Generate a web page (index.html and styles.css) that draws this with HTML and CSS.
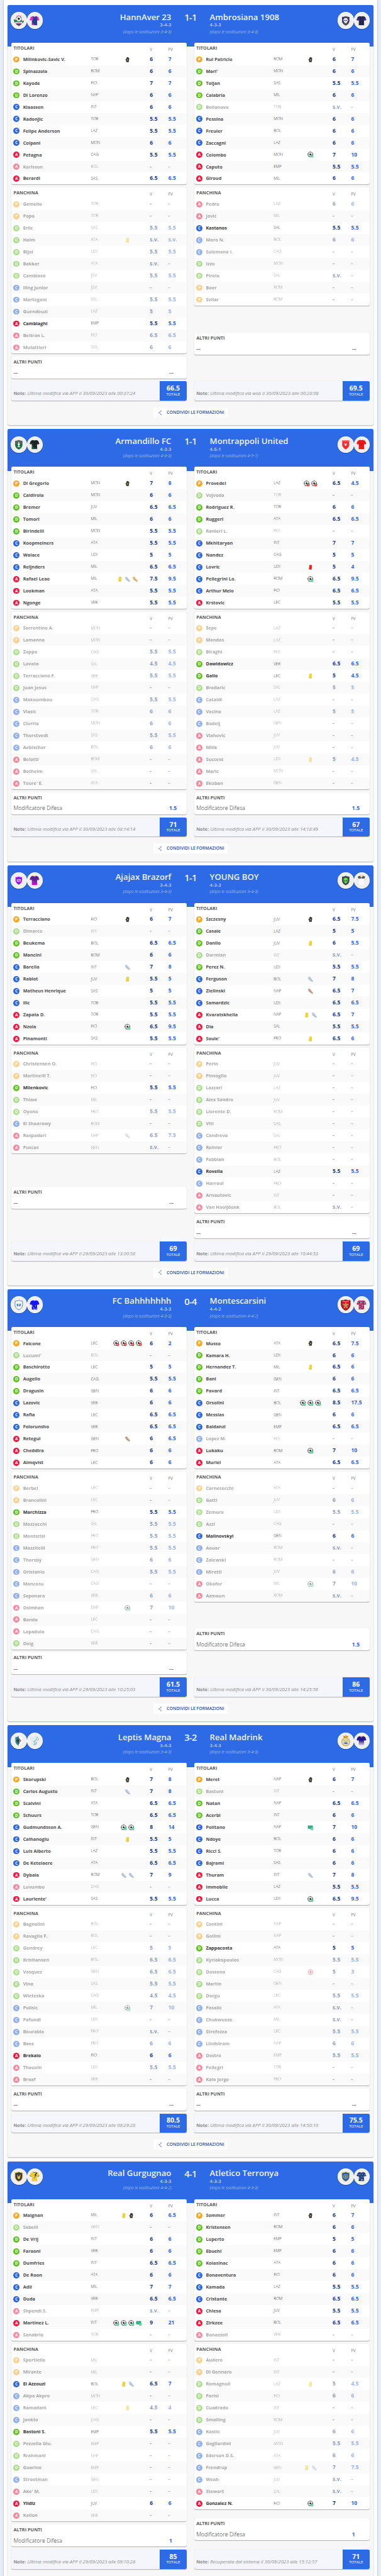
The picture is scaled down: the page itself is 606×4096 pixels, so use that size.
FILE: index.html
```html
<!DOCTYPE html>
<html lang="it">
<head>
<meta charset="utf-8">
<title>Formazioni</title>
<link rel="stylesheet" href="styles.css">
</head>
<body>
<svg class="sprite" aria-hidden="true">
  <defs>
    <linearGradient id="gGreen" x2="0" y2="1"><stop offset=".2" stop-color="#5a6360"/><stop offset=".6" stop-color="#14713f"/></linearGradient>
    <linearGradient id="gNavy" x2="0" y2="1"><stop offset=".45" stop-color="#24138c"/><stop offset="1" stop-color="#dcdce8"/></linearGradient>
    <linearGradient id="gPurple" x2="0" y2="1"><stop offset=".45" stop-color="#5b1f94"/><stop offset=".7" stop-color="#d010d8"/></linearGradient>
    <path id="shirtShape" d="M8.5 2 4 4 1.5 10.5 5.5 12 6.5 9.5 6.2 22H17.8L17.5 9.5 18.5 12 22.5 10.5 20 4 15.5 2Q12 4 8.5 2Z"/>
    <clipPath id="shirtClip"><use href="#shirtShape"/></clipPath>
    <path id="shieldShape" d="M4 4Q9 4 12 2 15 4 20 4V12Q20 19 12 22.5 4 19 4 12Z"/>
    <clipPath id="shieldClip"><use href="#shieldShape"/></clipPath>
  </defs>

  <symbol id="i-g" viewBox="0 0 16 16"><path d="M4.6 14.5 4.4 11 2.4 7.2Q3.4 6 4.6 7.2L4.9 3.2Q5.8 2 6.5 3L6.9 1.7Q7.8.7 8.6 1.7L8.9 2.2Q9.8 1.2 10.5 2.4L10.8 3.4Q11.8 3 12.2 4.2L11.8 9.5 10.8 14.5Z" fill="#3c3c3c"/><path d="M7.8 6.6 9.3 8.6 7.8 10.6 6.3 8.6Z" fill="#f3c52b"/></symbol>
  <symbol id="i-ball" viewBox="0 0 16 16"><circle cx="7.6" cy="7.6" r="6.5" fill="#fff" stroke="#3a3a3a" stroke-width="1"/><path d="M7.6 4.6 10.3 6.6 9.3 9.8H5.9L4.9 6.6ZM5.6 1.4 7.6 2.6 9.6 1.4ZM1.2 8.8 1.2 5.2 2.9 6.6 2.6 8.6ZM14 8.8V5.2L12.3 6.6 12.6 8.6ZM3.6 12.8 4.2 11 6 12.2 6 13.9ZM11.6 12.8 11 11 9.2 12.2 9.2 13.9Z" fill="#2e2e2e"/></symbol>
  <symbol id="i-b" viewBox="0 0 16 16"><use href="#i-ball"/><circle cx="11.8" cy="11.6" r="3.8" fill="#3fd08a"/><path d="M10 11.7 11.4 13 13.7 10.2" fill="none" stroke="#fff" stroke-width="1.1"/></symbol>
  <symbol id="i-x" viewBox="0 0 16 16"><use href="#i-ball"/><circle cx="11.8" cy="11.6" r="3.8" fill="#e62a26"/><path d="M10.4 10.2 13.2 13M13.2 10.2 10.4 13" stroke="#fff" stroke-width="1.1"/></symbol>
  <symbol id="i-y" viewBox="0 0 16 16"><path d="M5.4 2 12 2.8 10.6 14.2 3.8 13.4Z" fill="#f5d327"/></symbol>
  <symbol id="i-r" viewBox="0 0 16 16"><path d="M5.4 2 12 2.8 10.6 14.2 3.8 13.4Z" fill="#f3211b"/></symbol>
  <symbol id="i-s" viewBox="0 0 16 16"><path d="M1.6 2.4Q3.4 3.4 5.6 1.8L13 10.6Q15 13.2 13.6 14.2 11.6 14.2 9.4 12L3.6 7.6Q1.4 5.4 1.6 2.4Z" fill="#b4cce4"/><path d="M3.4 8 13.2 14.6" stroke="#8496ab" stroke-width=".9"/></symbol>
  <symbol id="i-o" viewBox="0 0 16 16"><path d="M1.6 2.4Q3.4 3.4 5.6 1.8L13 10.6Q15 13.2 13.6 14.2 11.6 14.2 9.4 12L3.6 7.6Q1.4 5.4 1.6 2.4Z" fill="#eab765"/><path d="M3.4 8 13.2 14.6" stroke="#a5804a" stroke-width=".9"/></symbol>
  <symbol id="i-z" viewBox="0 0 16 16"><path d="M1.6 2.4Q3.4 3.4 5.6 1.8L13 10.6Q15 13.2 13.6 14.2 11.6 14.2 9.4 12L3.6 7.6Q1.4 5.4 1.6 2.4Z" fill="#cf9a86"/><path d="M3.4 8 13.2 14.6" stroke="#96705f" stroke-width=".9"/></symbol>
  <symbol id="i-p" viewBox="0 0 16 16"><path d="M1.2 2.8H13.6V11H2.6L1.2 9.4Z" fill="#1fa27c"/><path d="M3 5H12M3 7.6H12M5.4 3.6V9.6M8.8 3.6V9.6" stroke="#7fd5ba" stroke-width=".5"/><circle cx="11.8" cy="11" r="3.6" fill="#3fd08a"/><path d="M10.2 11 11.5 12.3 13.5 9.7" fill="none" stroke="#fff" stroke-width="1.1"/></symbol>
  <symbol id="i-w" viewBox="0 0 16 16"><circle cx="8" cy="8" r="6.2" fill="#fff" stroke="#ee1c1c" stroke-width="1.1"/><path d="M8 4.8 10.8 6.9 9.7 10.3H6.3L5.2 6.9ZM5.8 1.9 8 3.2 10.2 1.9ZM1.8 8.6V5.6L3.4 7ZM14.2 8.6V5.6L12.6 7ZM4.2 13 5 11 6.6 13.6ZM11.8 13 11 11 9.4 13.6Z" fill="#ee1c1c"/></symbol>
  <symbol id="i-share" viewBox="0 0 10 16"><path d="M7 3.4 3 8 7 12.6" fill="none" stroke="#3c5da8" stroke-width="1"/><circle cx="7.6" cy="2.8" r="1.5" fill="#fff" stroke="#3c5da8" stroke-width=".9"/><circle cx="2.4" cy="8" r="1.5" fill="#fff" stroke="#3c5da8" stroke-width=".9"/><circle cx="7.6" cy="13.2" r="1.5" fill="#fff" stroke="#3c5da8" stroke-width=".9"/></symbol>

  <symbol id="l-hannaver" viewBox="0 0 24 24"><path d="M6.2 2.6 8 .6 9.8 2.6ZM10 1.4 12 -1 14 1.4ZM14.2 2.6 16 .6 17.8 2.6Z" fill="#ff7fb5"/><path d="M5 11H19V17Q18 21 12 23.5 6 21 5 17Z" fill="#43506a"/><circle cx="12" cy="8" r="5.8" fill="#fff" stroke="#222" stroke-width=".8"/><path d="M12 5 14.6 7 13.6 10H10.4L9.4 7ZM7 5.4 9 3.4 9 5ZM17 5.4 15 3.4V5Z" fill="#222"/><path d="M1 9.6Q5 9 8 12.4 12 15.6 23 12.2L21 17.2Q12 18.4 3 16.4Z" fill="#1d7d43"/><path d="M4.5 14.6H19.5V17.8H4.5Z" fill="#f4f4f4"/><path d="M7 16.2H17" stroke="#ef5c94" stroke-width="1.6"/><path d="M20 11.4 23 12.4 22 15Z" fill="#d62835"/></symbol>
  <symbol id="s-hannaver" viewBox="0 0 24 24"><g clip-path="url(#shirtClip)"><path d="M0 0H24V24H0Z" fill="#ff1fd0"/><path d="M8 0H16L18 9V24H15Q12 20 7 19L6 14 9 8Z" fill="#233f8f"/><path d="M6 16 14 23M6 19 11 24" stroke="#ff1fd0"/><path d="M9 2H15L12 4.6Z" fill="#f2a0c0"/></g></symbol>
  <symbol id="l-ambrosiana" viewBox="0 0 24 24"><g clip-path="url(#shieldClip)"><path d="M0 0H24V24H0Z" fill="#4b4b4d"/><path d="M4 4H8V16H4ZM16 4H20V16H16Z" fill="#35357c"/><path d="M4 9H20V12H4Z" fill="#42429a"/></g><circle cx="12" cy="11" r="4.6" fill="#eee"/><path d="M9.8 14H14.2V17.4H9.8Z" fill="#eee"/><circle cx="10.2" cy="11.2" r="1.2" fill="#222"/><circle cx="13.8" cy="11.2" r="1.2" fill="#222"/><path d="M12 12.6 12.7 14H11.3Z" fill="#222"/></symbol>
  <symbol id="s-ambrosiana" viewBox="0 0 24 24"><g clip-path="url(#shirtClip)"><path d="M0 0H24V24H0Z" fill="#222233"/><path d="M7.6 2V22M12 3V22M16.4 2V22" stroke="#33338a" stroke-width="1.5"/><path d="M0 9H6M18 9H24" stroke="#3c34c0" stroke-width="5"/></g></symbol>
  <symbol id="l-armandillo" viewBox="0 0 24 24"><use href="#shieldShape" fill="url(#gGreen)"/><path d="M10 9H14V13L12.7 14.4V16H15V17.6H9V16H11.3V14.4L10 13ZM11 6.4H13V8.4H11Z" fill="#f4f4f4"/></symbol>
  <symbol id="s-armandillo" viewBox="0 0 24 24"><g clip-path="url(#shirtClip)"><path d="M0 0H24V24H0Z" fill="#1e2426"/><path d="M6 13 9 15 8 18 11 17 12 21 15 19 18 21V24H6ZM8 9 10 11 9 12ZM14 12 17 14 15 16ZM2 8 5 9 4 12Z" fill="#18603a"/><path d="M9 2Q12 5 15 2" fill="none" stroke="#1f8a55"/></g></symbol>
  <symbol id="l-montrappoli" viewBox="0 0 24 24"><path d="M4.5 3.5H19.5V14Q18 19 12 22.5 6 19 4.5 14Z" fill="#ee2d33"/><path d="M4.5 3.5H19.5V6H4.5Z" fill="#f2575a"/></symbol>
  <symbol id="s-montrappoli" viewBox="0 0 24 24"><use href="#shirtShape" fill="#f51418"/><path d="M6.5 9.4H17.5M6.5 12.4H17.5" stroke="#9e1418" stroke-width=".7"/><path d="M9 2.2Q12 5 15 2.2" fill="none" stroke="#a01010"/></symbol>
  <symbol id="l-ajajax" viewBox="0 0 24 24"><path d="M5 5Q9 5.6 12 3.8 15 5.6 19 5V13Q18 18 12 21.4 6 18 5 13Z" fill="#9a19f0"/></symbol>
  <symbol id="s-ajajax" viewBox="0 0 24 24"><use href="#shirtShape" fill="url(#gPurple)"/><path d="M7 14 9 15.6 8.4 17M12 13 13.6 15 12.4 17M16 15 15 18M9.6 18 11 20M14 19 13 21" stroke="#5b1f94" stroke-width="1.2" fill="none"/><path d="M8.6 2Q12 6 15.4 2M1.8 10.3 5.6 11.8M22.2 10.3 18.4 11.8" fill="none" stroke="#eeb92c" stroke-width="1"/></symbol>
  <symbol id="l-young" viewBox="0 0 24 24"><use href="#shieldShape" fill="#454a48"/><path d="M12 6.4Q16.8 6.6 16.6 11.4 16 16 12 19 8 16 7.4 11.4 7.2 6.6 12 6.4Z" fill="#4ce94f"/><path d="M8.6 11.2 11.4 12.6 11 14.4Q8.8 13.6 8.6 11.2ZM15.4 11.2 12.6 12.6 13 14.4Q15.2 13.6 15.4 11.2Z" fill="#1c2c1e"/></symbol>
  <symbol id="s-young" viewBox="0 0 24 24"><use href="#shirtShape" fill="#fbfbfb" stroke="#e0e0e0" stroke-width=".4"/><path d="M4 4 8.5 2 12 6.4 15.5 2 20 4 18.6 8H15L12 7.4 9 8H5.4Z" fill="#555"/><path d="M9 0 12 4.4 15 0M2 9.6 5.6 11M22 9.6 18.4 11" fill="none" stroke="#e2b444" stroke-width="1"/></symbol>
  <symbol id="l-bah" viewBox="0 0 24 24"><use href="#shieldShape" fill="#fff" stroke="#4d7fb3" stroke-width="1.3"/><path d="M7.4 10 9.4 8.8 11.4 10.4V15L9.4 16 7.4 13.6ZM16.6 10 14.6 8.8 12.6 10.4V15L14.6 16 16.6 13.6Z" fill="#5f8fc0"/></symbol>
  <symbol id="s-bah" viewBox="0 0 24 24"><use href="#shirtShape" fill="#1616f2"/><path d="M7 13 8.6 14.6 7.6 16ZM9 17 11 18 9.6 20.4ZM13 14 15 13 14.6 16ZM12 18.6 13.4 21 11.4 21.6ZM15.4 18 17 19.6 15.8 21.4Z" fill="#eef"/></symbol>
  <symbol id="l-monte" viewBox="0 0 24 24"><path d="M2.4 2.6Q7 3 12 1 17 3 21.6 2.6V13Q20.6 20 12 24.4 3.4 20 2.4 13Z" fill="#d8141c" stroke="#3a1113" stroke-width="1.2"/><path d="M5 3.8Q12 6 19 3.8" fill="none" stroke="#f3c9b4" stroke-width="1.2"/><path d="M11 6H13L13.4 10 18 9V12L14.4 13.4 17 18.6 14.4 19.4 12.4 15.6 9.6 19.4 7 18.4 10.2 13.4 6 12V9.6L10.6 10Z" fill="#b59a62"/></symbol>
  <symbol id="s-monte" viewBox="0 0 24 24"><g clip-path="url(#shirtClip)"><path d="M0 0H24V24H0Z" fill="#c8185c"/><path d="M2 6 6 5 5 9ZM8 3 12 6 15 4 14 7 9 7ZM17 6 21 5 21 9 18 9ZM7 10 11 9 10 12ZM13 11 17 12 16 14 12 13ZM7 15 10 14 9 18ZM12 16 15 17 13 20ZM15 19 18 20V23Z" fill="#5fa8a4"/><path d="M9 8 12 8 11 10M13 14 15 15M8 19 11 20" stroke="#f1c8d4"/></g></symbol>
  <symbol id="l-leptis" viewBox="0 0 24 24"><path d="M12 1.6Q8 4.6 4.6 4.4V14Q5 19 12 23Z" fill="#2b8394"/><path d="M12 1.6Q16 4.6 19.4 4.4V14Q19 19 12 23Z" fill="#fff"/><g fill="none" stroke="#1d1d1d" stroke-width="1.3"><circle cx="12" cy="8.8" r="1.8"/><circle cx="9.6" cy="12" r="1.8"/><circle cx="14.4" cy="12" r="1.8"/><path d="M12 12V18M9.6 16 12 18 14.4 16"/></g></symbol>
  <symbol id="s-leptis" viewBox="0 0 24 24"><g clip-path="url(#shirtClip)"><path d="M0 0H24V24H0Z" fill="#e2ebef"/><path d="M18 2Q18 10 11 14 16 15 10 22M22 5Q19 16 13 21" fill="none" stroke="#8fbcc6" stroke-width="1.7"/></g></symbol>
  <symbol id="l-madrink" viewBox="0 0 24 24"><circle cx="12" cy="14.6" r="8.6" fill="#dcd6bd" stroke="#d8b02c" stroke-width="1.7"/><path d="M7 10 17 18M7 18 17 11" stroke="#a8a796" stroke-width="1.3"/><circle cx="12" cy="12.8" r="2.2" fill="#f2c832"/><path d="M8.6 19 10 15.4H14.4L16 19Z" fill="#3f78c8"/><path d="M7 5.4 6 .8 9 2.4 12 -1 15 2.4 18 .8 17 5.4Z" fill="#e2bb37"/><path d="M8.4 3 11 4.6M15.6 3 13 4.6" stroke="#c23434" stroke-width="1.4"/></symbol>
  <symbol id="s-madrink" viewBox="0 0 24 24"><use href="#shirtShape" fill="url(#gNavy)"/><path d="M8.6 2 12 4.6 15.4 2" fill="none" stroke="#e6bb3f" stroke-width="1.1"/></symbol>
  <symbol id="l-gurgugnao" viewBox="0 0 24 24"><use href="#shieldShape" fill="#38383a" stroke="#e2b73c" stroke-width="1.3"/><path d="M8.6 7.6 10 8 10.4 11.4 13.6 11.4 14.4 7.4 15.8 7.8 15 14.6 13 17.6H11L9.2 14.8Z" fill="#e7c24a"/></symbol>
  <symbol id="s-gurgugnao" viewBox="0 0 24 24"><use href="#shirtShape" fill="#f2cb2e"/><path d="M16.4 2.6 11.4 9.4H13.8L10.4 17 16.6 8.4H14.4L18 4Z" fill="#2b2b2b"/><path d="M9 2.2Q12 5 15 2.2M1.8 10.3 5.6 11.8M22.2 10.3 18.4 11.8" fill="none" stroke="#333" stroke-width="1"/></symbol>
  <symbol id="l-terronya" viewBox="0 0 24 24"><use href="#shieldShape" fill="#1f5cab" stroke="#e0b945" stroke-width="1.2"/><circle cx="12" cy="12" r="4.6" fill="none" stroke="#dcc774" stroke-width="1.1"/><circle cx="12" cy="12" r="2.4" fill="#8b9f86"/></symbol>
  <symbol id="s-terronya" viewBox="0 0 24 24"><g clip-path="url(#shirtClip)"><path d="M0 0H24V24H0Z" fill="#1d4390"/><path d="M3 7 5 6 5 8ZM8 6 10 7 8 9ZM14 5 15 8 13 8ZM19 6 21 8 19 9ZM12 11 13 13 11 13ZM15 12 17 13 16 15ZM8 14 9 16 7 17ZM12 17 14 18 13 21 11 20ZM16 18 17 20 15 21Z" fill="#e9c93d"/><path d="M9 2.2Q12 5 15 2.2" fill="none" stroke="#e9c93d"/><path d="M1 9 3 9 2 11Z" fill="#e23b3b"/></g></symbol>
</svg>

<main class="page" id="matches"></main>
<script src="app.js"></script>
</body>
</html>
```
FILE: styles.css
```css
html { font-size: 6.1212px; }

* { box-sizing: border-box; }

body {
  margin: 0;
  height: 4096px;
  overflow: hidden;
  background: #e8ecf6;
  font-family: "Open Sans", "Noto Sans", sans-serif;
  font-size: 1.2rem;
  color: #4c4c4c;
}

.sprite { position: absolute; width: 0; height: 0; }
.crest-letter { font: 800 9px "Open Sans", sans-serif; fill: #fff; text-anchor: middle; }
.crest-mono { font: 700 7px "Open Sans", sans-serif; fill: #fff; text-anchor: middle; }

.page {
  width: 97rem;
  min-height: 4096px;
  margin: 0 auto;
  padding: 1.33rem 1rem 0;
  background: #fff;
  box-shadow: 0 0 2px rgba(60, 75, 120, .55);
}

.match {
  margin-bottom: 1rem;
  padding-bottom: 2rem;
  border-radius: .4rem;
  background: #f7f7f7;
  box-shadow: 0 1px 2px rgba(0, 0, 0, .32);
}

.match-head {
  display: grid;
  grid-template-columns: 9rem 1fr 10rem 1fr 9rem;
  height: 10.82rem;
  margin-bottom: -1.02rem;
  border-radius: .4rem .4rem 0 0;
  background: #2d6ae6;
  color: #f1f4fb;
}

.crests { display: flex; padding: 1.85rem 0 0 .85rem; }
.crests.away { padding-left: 0; margin-left: -.2rem; }
.crest {
  flex: none;
  display: grid;
  place-items: center;
  width: 4.1rem;
  height: 4.3rem;
  border: .2rem solid #fff;
  border-radius: 50%;
  background: #efefef;
  box-shadow: 0 1px 1px rgba(0, 0, 0, .25);
}
.crest svg { width: 2.9rem; height: 2.9rem; overflow: visible; }

.team { padding-top: 1.86rem; white-space: nowrap; }
.team.home { text-align: right; }
.team h2 { margin: 0; font-size: 2.15rem; font-weight: 600; line-height: 2.6rem; }
.module { font-size: 1.25rem; font-weight: 600; line-height: 1.6rem; color: #c4d2f2; }
.after { margin-top: .1rem; font-size: 1.1rem; font-style: italic; font-weight: 300; line-height: 1.6rem; color: #d3def7; }
.score { padding-top: 1.97rem; font-size: 2.4rem; font-weight: 600; line-height: 2.6rem; letter-spacing: -.1rem; text-align: center; }

.columns {
  position: relative;
  display: grid;
  grid-template-columns: 1fr 1fr;
  gap: 2rem;
  padding: 0 1rem;
}
.column { display: flex; flex-direction: column; justify-content: space-between; gap: .8rem; }
.squads { display: flex; flex-direction: column; gap: .8rem; }

.card {
  border-radius: .4rem;
  background: #fff;
  box-shadow: 0 1px 1px rgba(0, 0, 0, .28), 0 0 1px rgba(0, 0, 0, .15);
}

.grid-row {
  display: grid;
  grid-template-columns: 2.5rem 17.6rem 3.8rem 11.55rem 4.8rem 1fr;
  padding-left: .5rem;
}

.card-head { height: 2.7rem; line-height: 2.7rem; }
.card-head b { grid-column: 1 / 5; color: #5c5c5c; }
.card-head span { padding-top: .5rem; font-size: 1.04rem; font-weight: 400; color: #777; }

.player { height: 3.103rem; line-height: 3.103rem; border-radius: .4rem; white-space: nowrap; }
.player:nth-child(odd) { background: #fafafa; }
.squad.bench .player.on { color: #333; }
.player.off > * { opacity: .5; }

.role {
  align-self: center;
  width: 1.6rem;
  height: 1.6rem;
  border-radius: 50%;
  font-size: 1rem;
  font-weight: 700;
  line-height: 1.6rem;
  text-align: center;
  color: #fff;
}
.role-P { background: #f9a825; }
.role-D { background: #5cc31d; }
.role-C { background: #2b66e5; }
.role-A { background: #f4163f; }

.name { font-weight: 700; }
.club { padding-bottom: .2rem; margin-top: -.1rem; font-size: 1.04rem; font-weight: 300; color: #222; }
.events { display: flex; justify-content: center; align-items: center; gap: .36rem; }
.events svg { flex: none; width: 1.6rem; height: 1.6rem; filter: drop-shadow(0 0 .5px rgba(0, 0, 0, .3)); }
.vote, .final { font-size: 1.4rem; font-weight: 700; color: #1a3a80; }
.final { color: #2f66e4; }

.extra-row {
  display: grid;
  grid-template-columns: 1fr 4.55rem;
  height: 3.02rem;
  padding-left: .5rem;
  font-size: 1.46rem;
  font-weight: 300;
  line-height: 3.02rem;
  color: #333;
}
.extra-row.none { font-size: 1.2rem; font-weight: 600; line-height: 3.2rem; }
.extra-row b { color: #2f66e4; font-size: 1.4rem; font-weight: 700; }

.summary { display: flex; height: 5.02rem; overflow: hidden; background: #f4f6fb; }
.note { flex: 1; padding: 2.4rem 0 0 .5rem; line-height: 1.6rem; color: #8e8e8e; font-size: 1.245rem; font-style: italic; font-weight: 400; white-space: nowrap; }
.note b { font-size: 1.2rem; font-style: normal; font-weight: 700; color: #8c8c8c; }
.total { width: 7rem; padding-top: .8rem; background: #2d6ae6; color: #fff; text-align: center; }
.total b { display: block; font-size: 1.72rem; line-height: 2rem; }
.total span { display: block; margin-top: -.1rem; font-size: 1.01rem; line-height: 1.2rem; }

.share {
  display: flex;
  align-items: center;
  width: 19.2rem;
  height: 2.6rem;
  margin: 1.8rem auto 0;
  padding: 0 0 0 1.2rem;
  border: 0;
  border-radius: .3rem;
  background: #fff;
  font: 600 1.14rem/2.6rem "Open Sans", sans-serif;
  color: #274c9d;
  white-space: nowrap;
}
.share svg { width: .9rem; height: 1.4rem; margin-right: 1.3rem; }
```
FILE: app.js
```js
// Player line: role name,club,vote,final[,events]
// "+" marks a bench player who came in, "-" a starter who did not count.
// Events: g clean sheet, b goal, x conceded, y/r cards, s/o/z assists, p penalty scored, w own goal.
const MATCHES = [
  { score: '1-1', sides: [
    { name: 'HannAver 23', id: 'hannaver', module: '3-4-3', after: '3-4-3', total: '66.5', note: 'Ultima modifica via APP il 30/09/2023 alle 00:37:24',
      start: "P Milinkovic-Savic V.,TOR,6,7,g|D Spinazzola,ROM,6,6|D Kayode,FIO,7,7|D Di Lorenzo,NAP,6,6|C Klaassen,INT,6,6|C Radonjic,TOR,5.5,5.5|C Felipe Anderson,LAZ,5.5,5.5|C Colpani,MON,6,6|A Petagna,CAG,5.5,5.5|-A Karlsson,BOL,-,-|A Berardi,SAS,6.5,6.5",
      bench: "P Gemello,TOR,-,-|P Popa,TOR,-,-|D Erlic,SAS,5.5,5.5|D Holm,ATA,s.v.,s.v.,y|D Bijol,UDI,5.5,5.5|D Bakker,ATA,s.v.,-|D Cambiaso,JUV,5.5,5.5|C Iling Junior,JUV,-,-|C Martegani,SAL,5.5,5.5|C Guendouzi,LAZ,5,5|+A Cambiaghi,EMP,5.5,5.5|A Beltran L.,FIO,6.5,6.5|A Mulattieri,SAS,6,6" },
    { name: 'Ambrosiana 1908', id: 'ambrosiana', module: '4-3-3', after: '3-4-3', total: '69.5', note: 'Ultima modifica via web il 30/09/2023 alle 00:28:08',
      start: "P Rui Patricio,ROM,6,7,g|D Mari',MON,6,6|D Toljan,SAS,5.5,5.5|D Calabria,MIL,6,6|-D Bellanova,TOR,s.v.,-|C Pessina,MON,6,6|C Freuler,BOL,6,6|C Zaccagni,LAZ,6,6|A Colombo,MON,7,10,b|A Caputo,EMP,5.5,5.5|A Giroud,MIL,6,6",
      bench: "A Pedro,LAZ,6,6|A Jovic,MIL,-,-|+C Kastanos,SAL,5.5,5.5|C Moro N.,BOL,6,6|C Sulemana I.,CAG,-,-|D Izzo,MON,-,-|D Pirola,SAL,s.v.,-|P Boer,ROM,-,-|P Svilar,ROM,-,-" } ] },
  { score: '1-1', sides: [
    { name: 'Armandillo FC', id: 'armandillo', module: '4-3-3', after: '4-3-3', total: '71', extra: '1.5', note: 'Ultima modifica via APP il 30/09/2023 alle 08:14:14',
      start: "P Di Gregorio,MON,7,8,g|D Caldirola,MON,6,6|D Bremer,JUV,6.5,6.5|D Tomori,MIL,6,6|D Birindelli,MON,5.5,5.5|C Koopmeiners,ATA,5.5,5.5|C Walace,UDI,5,5|C Reijnders,MIL,6.5,6.5|A Rafael Leao,MIL,7.5,9.5,yso|A Lookman,ATA,5.5,5.5|A Ngonge,VER,5.5,5.5",
      bench: "P Sorrentino A.,MON,-,-|P Lamanna,MON,-,-|D Zappa,CAG,5.5,5.5|D Lovato,SAL,4.5,4.5|D Terracciano F.,VER,5.5,5.5|D Juan Jesus,NAP,-,-|C Makoumbou,CAG,5.5,5.5|C Vlasic,TOR,6,6|C Ciurria,MON,6,6|C Thorstvedt,SAS,5.5,5.5|C Aebischer,BOL,6,6|A Belotti,ROM,-,-|A Botheim,SAL,-,-|A Toure' E.,ATA,-,-" },
    { name: 'Montrappoli United', id: 'montrappoli', letter: 'v', module: '4-5-1', after: '4-5-1', total: '67', extra: '1.5', note: 'Ultima modifica via APP il 30/09/2023 alle 14:18:49',
      start: "P Provedel,LAZ,6.5,4.5,xx|-D Vojvoda,TOR,-,-|D Rodriguez R.,TOR,6,6|D Ruggeri,ATA,6.5,6.5|-D Ranieri L.,FIO,-,-|C Mkhitaryan,INT,7,7|C Nandez,CAG,5,5|C Lovric,UDI,5,4,r|C Pellegrini Lo.,ROM,6.5,9.5,b|C Arthur Melo,FIO,6.5,6.5|A Krstovic,LEC,5.5,5.5",
      bench: "P Sepe,LAZ,-,-|P Mandas,LAZ,-,-|D Biraghi,FIO,-,-|+D Dawidowicz,VER,6.5,6.5|+D Gallo,LEC,5,4.5,y|D Bradaric,SAL,5,5|C Cataldi,LAZ,-,-|C Vecino,LAZ,5,5|C Badelj,GEN,-,-|A Vlahovic,JUV,-,-|A Milik,JUV,-,-|A Success,UDI,5,4.5,y|A Maric,MON,-,-|A Ekuban,GEN,-,-" } ] },
  { score: '1-1', sides: [
    { name: 'Ajajax Brazorf', id: 'ajajax', mono: 'G5', module: '3-4-3', after: '3-4-3', total: '69', note: 'Ultima modifica via APP il 29/09/2023 alle 13:30:58',
      start: "P Terracciano,FIO,6,7,g|-D Dimarco,INT,-,-|D Beukema,BOL,6.5,6.5|D Mancini,ROM,6,6|C Barella,INT,7,8,s|C Rabiot,JUV,5.5,5,y|C Matheus Henrique,SAS,5,5|C Ilic,TOR,5.5,5.5|A Zapata D.,TOR,5.5,5.5|A Nzola,FIO,6.5,9.5,b|A Pinamonti,SAS,5.5,5.5",
      bench: "P Christensen O.,FIO,-,-|P Martinelli T.,FIO,-,-|+D Milenkovic,FIO,5.5,5.5|D Thiaw,MIL,-,-|D Oyono,FRO,5.5,5.5|C El Shaarawy,ROM,-,-|A Raspadori,NAP,6.5,7.5,s|A Puscas,GEN,s.v.,-" },
    { name: 'YOUNG BOY', id: 'young', module: '4-3-3', after: '3-4-3', total: '69', note: 'Ultima modifica via APP il 29/09/2023 alle 10:44:53',
      start: "P Szczesny,JUV,6.5,7.5,g|D Casale,LAZ,5,5|D Danilo,JUV,6,5.5,y|-D Darmian,INT,s.v.,-|D Perez N.,UDI,5.5,5.5|C Ferguson,BOL,7,8,s|C Zielinski,NAP,6.5,7,z|C Samardzic,UDI,6.5,6.5|A Kvaratskhelia,NAP,6.5,7,ys|A Dia,SAL,5.5,5.5|A Soule',FRO,6.5,6,y",
      bench: "P Perin,JUV,-,-|P Pinsoglio,JUV,-,-|D Lazzari,LAZ,-,-|D Alex Sandro,JUV,-,-|D Llorente D.,ROM,-,-|D Viti,SAS,-,-|C Candreva,SAL,-,-|C Reinier,FRO,-,-|C Fabbian,BOL,-,-|+C Rovella,LAZ,5.5,5.5|C Harroui,FRO,-,-|A Arnautovic,INT,-,-|A Van Hooijdonk,BOL,s.v.,-" } ] },
  { score: '0-4', sides: [
    { name: 'FC Bahhhhhhh', id: 'bah', module: '4-3-3', after: '4-3-3', total: '61.5', note: 'Ultima modifica via APP il 29/09/2023 alle 10:25:03',
      start: "P Falcone,LEC,6,2,xxxx|-D Lucumi',BOL,-,-|D Baschirotto,LEC,5,5|D Augello,CAG,5.5,5.5|D Dragusin,GEN,6,6|C Lazovic,VER,6,6|C Rafia,LEC,6.5,6.5|C Folorunsho,VER,6.5,6.5|A Retegui,GEN,6,6.5,z|A Cheddira,FRO,6,6|A Almqvist,LEC,6,6",
      bench: "P Borbei,LEC,-,-|P Brancolini,LEC,-,-|+D Marchizza,FRO,5.5,5.5|D Mazzocchi,SAL,5.5,5.5|D Monterisi,FRO,5.5,5.5|C Mazzitelli,FRO,5.5,5.5|C Thorsby,GEN,6,6|C Oristanio,CAG,5.5,5.5|C Mancosu,CAG,-,-|C Saponara,VER,6,6|A Osimhen,NAP,7,10,b|A Banda,LEC,-,-|A Lapadula,CAG,-,-|D Doig,VER,-,-" },
    { name: 'Montescarsini', id: 'monte', module: '4-4-2', after: '4-4-2', total: '86', extra: '1.5', note: 'Ultima modifica via APP il 30/09/2023 alle 14:25:56',
      start: "P Musso,ATA,6.5,7.5,g|D Kamara H.,UDI,6,6|D Hernandez T.,MIL,6.5,6,y|D Bani,GEN,6,6|D Pavard,INT,6.5,6.5|C Orsolini,BOL,8.5,17.5,bbb|C Messias,GEN,6,6|C Baldanzi,EMP,6.5,6.5|-C Lopez M.,FIO,-,-|A Lukaku,ROM,7,10,b|A Muriel,ATA,6.5,6.5",
      bench: "P Carnesecchi,ATA,-,-|D Gatti,JUV,6,6|D Zemura,UDI,5.5,5.5|D Azzi,CAG,-,-|+C Malinovskyi,GEN,6,6|C Aouar,ROM,s.v.,-|C Zalewski,ROM,-,-|C Miretti,JUV,6,6|A Okafor,MIL,7,10,b|A Azmoun,ROM,s.v.,-" } ] },
  { score: '3-2', sides: [
    { name: 'Leptis Magna', id: 'leptis', module: '3-4-3', after: '3-4-3', total: '80.5', note: 'Ultima modifica via APP il 29/09/2023 alle 09:29:28',
      start: "P Skorupski,BOL,7,8,g|D Carlos Augusto,INT,7,8,s|D Scalvini,ATA,6.5,6.5|D Schuurs,TOR,6.5,6.5|C Gudmundsson A.,GEN,8,14,bb|C Calhanoglu,INT,5.5,5,y|C Luis Alberto,LAZ,5.5,5.5|C De Ketelaere,ATA,6.5,6.5|A Dybala,ROM,7,9,ss|-A Luvumbo,CAG,-,-|A Lauriente',SAS,5.5,5.5",
      bench: "P Bagnolini,BOL,-,-|P Ravaglia F.,BOL,-,-|D Gendrey,LEC,5,5|D Kristiansen,BOL,6.5,6.5|D Vasquez,GEN,6.5,6.5|D Vina,SAS,5.5,5.5|D Wieteska,CAG,4.5,4.5|C Pulisic,MIL,7,10,b|C Pafundi,UDI,-,-|C Bourabia,FRO,s.v.,-|C Baez,FRO,6,6|+A Brekalo,FIO,6,6|A Thauvin,UDI,5.5,5.5|A Braaf,VER,-,-" },
    { name: 'Real Madrink', id: 'madrink', module: '3-4-3', after: '3-4-3', total: '75.5', note: 'Ultima modifica via APP il 30/09/2023 alle 14:50:10',
      start: "P Meret,NAP,6,7,g|-D Bastoni,INT,-,-|D Natan,NAP,6.5,6.5|D Acerbi,INT,6,6|C Politano,NAP,7,10,p|C Ndoye,BOL,6,6|C Ricci S.,TOR,6,6|C Bajrami,SAS,6,6|A Thuram,INT,7,8,s|A Immobile,LAZ,5.5,5.5|A Lucca,UDI,6.5,9.5,b",
      bench: "P Contini,NAP,-,-|P Gollini,NAP,-,-|+D Zappacosta,ATA,5,5|D Kyriakopoulos,MON,5.5,5.5|D Dossena,CAG,5,3,w|D Martin,GEN,-,-|D Dorgu,LEC,5.5,5.5|C Pasalic,ATA,s.v.,-|C Chukwueze,MIL,s.v.,-|C Strefezza,LEC,5.5,5.5|C Lindstrom,NAP,6,6|A Destro,EMP,5.5,5.5|A Pellegri,TOR,-,-|A Kaio Jorge,FRO,-,-" } ] },
  { score: '4-1', sides: [
    { name: 'Real Gurgugnao', id: 'gurgugnao', module: '4-3-3', after: '4-4-2', total: '85', extra: '1', note: 'Ultima modifica via APP il 29/09/2023 alle 09:10:28',
      start: "P Maignan,MIL,6,6.5,yg|-D Sabelli,GEN,-,-|D De Vrij,INT,6,6|D Faraoni,VER,6,6|D Dumfries,INT,6.5,6.5|C De Roon,ATA,6,6|C Adli,MIL,7,7|C Duda,VER,6.5,6.5|-A Shpendi S.,EMP,s.v.,-|A Martinez L.,INT,9,21,bbbp|-A Sanabria,TOR,-,-",
      bench: "P Sportiello,MIL,-,-|P Mirante,MIL,-,-|+C El Azzouzi,BOL,6.5,7,ys|C Akpa Akpro,MON,-,-|C Ramadani,LEC,4.5,4,y|C Jankto,CAG,-,-|+D Bastoni S.,EMP,5.5,5.5|D Pezzella Giu.,EMP,-,-|D Rrahmani,NAP,-,-|D Guarino,EMP,-,-|C Strootman,GEN,-,-|A Ake' M.,UDI,-,-|+A Yildiz,JUV,6,6|A Kallon,VER,-,-" },
    { name: 'Atletico Terronya', id: 'terronya', module: '4-3-3', after: '4-3-3', total: '71', extra: '1', note: 'Recuperata dal sistema il 30/09/2023 alle 15:12:57',
      start: "P Sommer,INT,6,7,g|D Kristensen,ROM,6,6|D Luperto,EMP,5,5|D Ebuehi,EMP,6,6|D Kolasinac,ATA,6,6|C Bonaventura,FIO,6,6|C Kamada,LAZ,5.5,5.5|C Cristante,ROM,6.5,6.5|A Chiesa,JUV,5.5,5.5|A Zirkzee,BOL,6.5,6.5|-A Bonazzoli,VER,-,-",
      bench: "P Audero,INT,-,-|P Di Gennaro,INT,-,-|D Romagnoli,LAZ,5,4.5,y|D Parisi,FIO,6,6|D Cuadrado,INT,-,-|D Smalling,ROM,-,-|C Kostic,JUV,6,6|C Gagliardini,MON,5.5,5.5|C Ederson D.S.,ATA,6,6|C Frendrup,GEN,7,7.5,ys|C Weah,JUV,s.v.,-|A Stewart,SAL,s.v.,-|+A Gonzalez N.,FIO,7,10,b" } ] }
];

const icon = id => `<svg><use href="#${id}"/></svg>`;

function player(line, bench) {
  const mark = /^[+-]/.test(line) ? line[0] : '';
  const text = mark ? line.slice(1) : line;
  const [name, club, vote, final, events = ''] = text.slice(2).split(',');
  const on = bench ? mark === '+' : mark !== '-';
  return `<div class="player grid-row ${on ? 'on' : 'off'}">
    <span class="role role-${text[0]}">${text[0]}</span><span class="name">${name}</span><span class="club">${club}</span>
    <span class="events">${[...events].map(e => icon('i-' + e)).join('')}</span>
    <span class="vote">${vote}</span><span class="final">${final}</span></div>`;
}

const squad = (title, lines, bench) => `<section class="card squad ${bench ? 'bench' : ''}">
  <div class="card-head grid-row"><b>${title}</b><span>V</span><span>FV</span></div>
  ${lines.split('|').map(l => player(l, bench)).join('')}</section>`;

const column = s => `<div class="column">
  <div class="squads">${squad('TITOLARI', s.start, false)}${squad('PANCHINA', s.bench, true)}</div>
  <section class="card extra"><div class="card-head grid-row"><b>ALTRI PUNTI</b></div>
    ${s.extra ? `<div class="extra-row"><span>Modificatore Difesa</span><b>${s.extra}</b></div>`
              : '<div class="extra-row none"><span>---</span><span>---</span></div>'}</section>
  <section class="card summary"><div class="note"><b>Note:</b> ${s.note}</div>
    <div class="total"><b>${s.total}</b><span>TOTALE</span></div></section></div>`;

// The crest's lettering sits over its shield, in the same 24-unit box.
const lettering = s =>
  s.letter ? `<text x="12" y="15.4" class="crest-letter">${s.letter}</text>` :
  s.mono ? `<text x="12" y="15" class="crest-mono">${s.mono}</text>` : '';
const crests = (s, side) => `<div class="crests ${side}">
  <span class="crest"><svg viewBox="0 0 24 24"><use href="#l-${s.id}" width="24" height="24"/>${lettering(s)}</svg></span><span class="crest">${icon('s-' + s.id)}</span></div>`;
const team = (s, side) => `<div class="team ${side}"><h2>${s.name}</h2><div class="module">${s.module}</div><div class="after">(dopo le sostituzioni ${s.after})</div></div>`;

document.getElementById('matches').innerHTML = MATCHES.map(({ score, sides: [h, a] }) => `
  <article class="match">
    <header class="match-head">${crests(h, 'home')}${team(h, 'home')}
      <div class="score">${score}</div>${team(a, 'away')}${crests(a, 'away')}</header>
    <div class="columns">${column(h)}${column(a)}</div>
    <button class="share">${icon('i-share')}CONDIVIDI LE FORMAZIONI</button>
  </article>`).join('');
```
